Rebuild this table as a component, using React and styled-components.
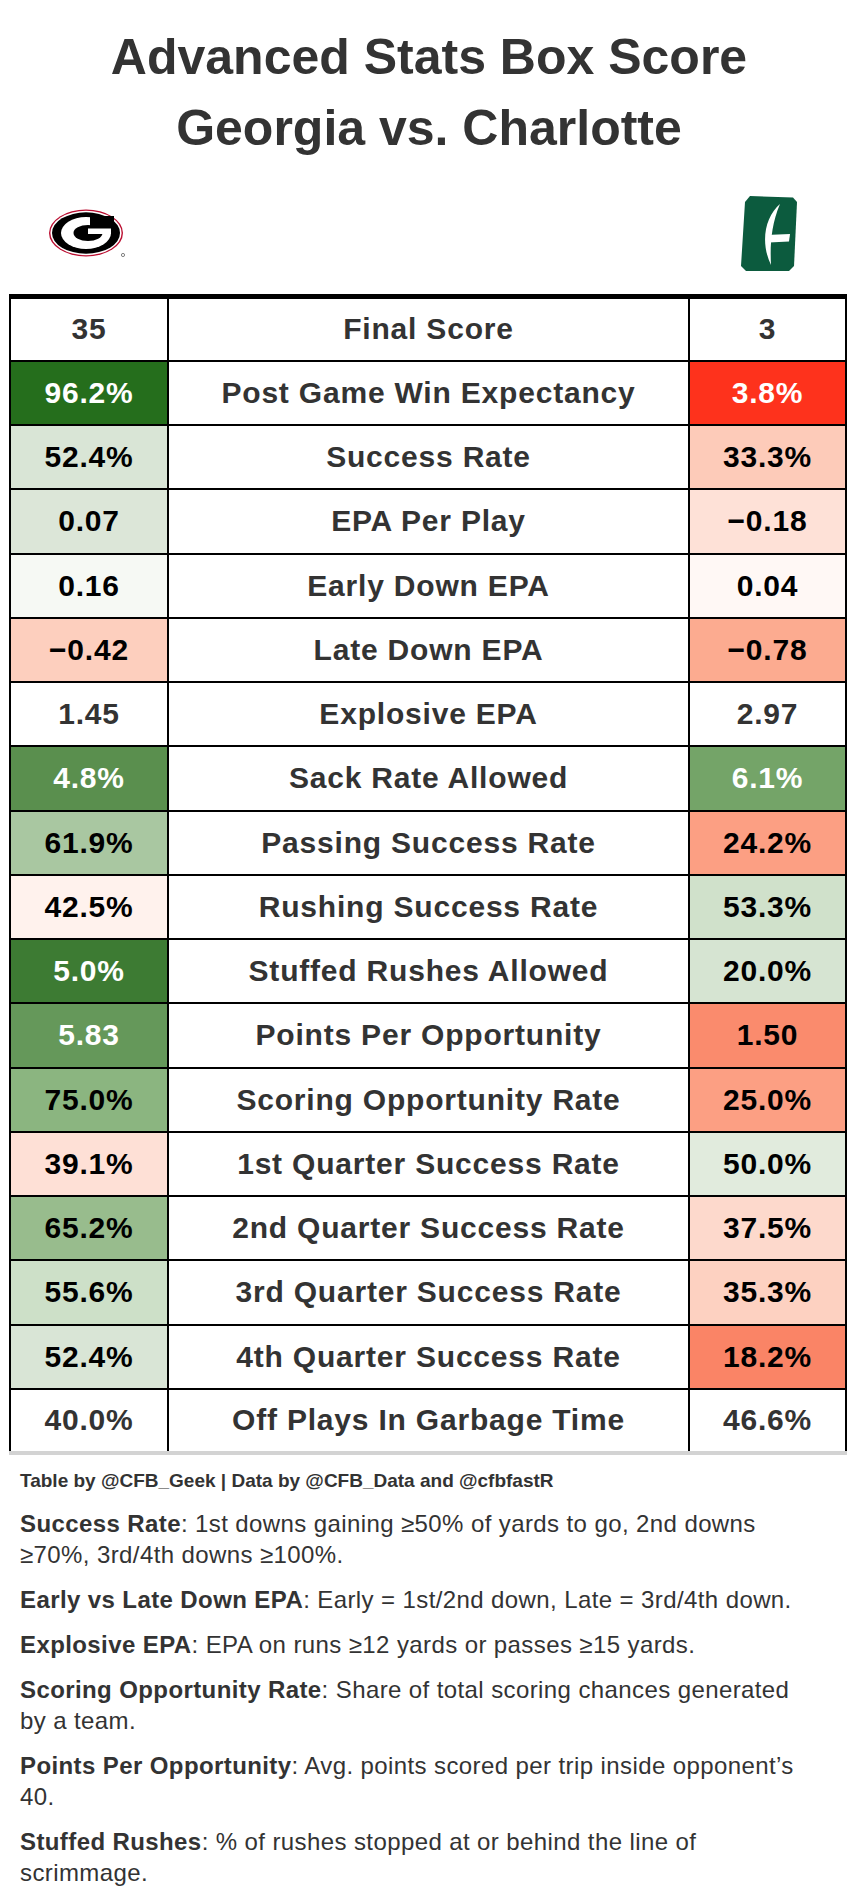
import React from "react";
import styled, { createGlobalStyle } from "styled-components";

const GlobalStyle = createGlobalStyle`
  body {
    margin: 0;
    background: #ffffff;
    font-family: "Liberation Sans", Arial, sans-serif;
  }
`;

const Page = styled.div`
  width: 858px;
  background: #ffffff;
  padding-bottom: 20px;
`;

const Title = styled.h1`
  margin: 0;
  padding-top: 22px;
  text-align: center;
  font-size: 50px;
  line-height: 71px;
  font-weight: 700;
  letter-spacing: 0;
  color: #333333;
`;

const LogoRow = styled.div`
  display: grid;
  grid-template-columns: 158px 1fr 157px;
  align-items: center;
  height: 120px;
  padding: 10px 11px 0 9px;
`;

const LogoSlot = styled.div`
  display: flex;
  justify-content: center;
  align-items: center;
`;

const Table = styled.table`
  margin-left: 9px;
  width: 838px;
  border-collapse: collapse;
  border-top: 5px solid #000;
  border-left: 2px solid #000;
  border-right: 2px solid #000;
  border-bottom: 4px solid #d3d3d3;
  table-layout: fixed;
`;

const Row = styled.tr`
  height: 64.25px;
`;

const Cell = styled.td`
  border: 2px solid #000;
  padding: 0;
  text-align: center;
  vertical-align: middle;
  font-size: 30px;
  font-weight: 700;
  letter-spacing: 0.8px;
  background: ${({ $bg }) => $bg || "#ffffff"};
  color: ${({ $fg }) => $fg || "#333333"};
`;

const Footer = styled.div`
  padding: 14px 0 0 20px;
  width: 800px;
  color: #333333;
`;

const Credit = styled.p`
  margin: 0 0 15px;
  font-size: 19px;
  font-weight: 700;
  line-height: 24px;
`;

const Note = styled.p`
  margin: 0 0 14px;
  font-size: 24px;
  line-height: 31px;
  letter-spacing: 0.4px;

  b {
    font-weight: 700;
  }
`;

const W = "#ffffff";
const K = "#000000";

const rows = [
  ["35", null, "#333333", "Final Score", "3", null, "#333333"],
  ["96.2%", "#256e1c", W, "Post Game Win Expectancy", "3.8%", "#fe321c", W],
  ["52.4%", "#d9e5d6", K, "Success Rate", "33.3%", "#fdcbb9", K],
  ["0.07", "#dce6d8", K, "EPA Per Play", "\u22120.18", "#fee1d7", K],
  ["0.16", "#f6f9f4", K, "Early Down EPA", "0.04", "#fff8f5", K],
  ["\u22120.42", "#fdcfbe", K, "Late Down EPA", "\u22120.78", "#fcab90", K],
  ["1.45", null, "#333333", "Explosive EPA", "2.97", null, "#333333"],
  ["4.8%", "#5a8f4e", W, "Sack Rate Allowed", "6.1%", "#74a468", W],
  ["61.9%", "#a9c7a1", K, "Passing Success Rate", "24.2%", "#fc9f83", K],
  ["42.5%", "#fff2ed", K, "Rushing Success Rate", "53.3%", "#d0e1cb", K],
  ["5.0%", "#3d7b33", W, "Stuffed Rushes Allowed", "20.0%", "#d6e4d2", K],
  ["5.83", "#65985a", W, "Points Per Opportunity", "1.50", "#fa8b6d", K],
  ["75.0%", "#8bb580", K, "Scoring Opportunity Rate", "25.0%", "#fc9f83", K],
  ["39.1%", "#fee0d6", K, "1st Quarter Success Rate", "50.0%", "#e1ebdd", K],
  ["65.2%", "#98bc8d", K, "2nd Quarter Success Rate", "37.5%", "#fdd9cc", K],
  ["55.6%", "#cde0c8", K, "3rd Quarter Success Rate", "35.3%", "#fdd1c1", K],
  ["52.4%", "#d9e5d6", K, "4th Quarter Success Rate", "18.2%", "#fa8466", K],
  ["40.0%", null, "#333333", "Off Plays In Garbage Time", "46.6%", null, "#333333"],
];

function GeorgiaLogo() {
  return (
    <svg width="78" height="50" viewBox="0 0 78 50">
      <ellipse cx="37" cy="24" rx="37" ry="23.5" fill="#ba0c2f" />
      <ellipse cx="37" cy="24" rx="35.6" ry="22.2" fill="#ffffff" />
      <ellipse cx="37" cy="24" rx="34" ry="20.7" fill="#000000" />
      <ellipse cx="37" cy="24" rx="25" ry="16" fill="#ffffff" />
      <ellipse cx="39" cy="24" rx="14.5" ry="8" fill="#000000" />
      <rect x="41" y="7" width="24" height="14.5" fill="#000000" />
      <rect x="39" y="19.5" width="23" height="5.5" fill="#ffffff" />
      <circle cx="74" cy="46" r="1.6" fill="none" stroke="#333" strokeWidth="0.6" />
    </svg>
  );
}

function CharlotteLogo() {
  return (
    <svg width="56" height="76" viewBox="0 0 56 76">
      <path
        d="M9 0 L52 1.5 L56 6 L53 70 L48 75 L5 75 L0 70 L4 6 Z"
        fill="#0c5b3e"
      />
      <path d="M39 8 C24 21 19 46 30 69 C29 50 30 29 39 8 Z" fill="#ffffff" />
      <path d="M25 39 L49 38 L48 45.5 L28 46.5 Z" fill="#ffffff" />
    </svg>
  );
}

export default function App() {
  return (
    <Page>
      <GlobalStyle />
      <Title>
        Advanced Stats Box Score
        <br />
        Georgia vs. Charlotte
      </Title>
      <LogoRow>
        <LogoSlot>
          <GeorgiaLogo />
        </LogoSlot>
        <div />
        <LogoSlot>
          <CharlotteLogo />
        </LogoSlot>
      </LogoRow>
      <Table>
        <colgroup>
          <col style={{ width: "158px" }} />
          <col />
          <col style={{ width: "157px" }} />
        </colgroup>
        <tbody>
          {rows.map(([lv, lbg, lfg, label, rv, rbg, rfg]) => (
            <Row key={label}>
              <Cell $bg={lbg} $fg={lfg}>{lv}</Cell>
              <Cell>{label}</Cell>
              <Cell $bg={rbg} $fg={rfg}>{rv}</Cell>
            </Row>
          ))}
        </tbody>
      </Table>
      <Footer>
        <Credit>Table by @CFB_Geek | Data by @CFB_Data and @cfbfastR</Credit>
        <Note>
          <b>Success Rate</b>: 1st downs gaining ≥50% of yards to go, 2nd downs ≥70%, 3rd/4th downs ≥100%.
        </Note>
        <Note>
          <b>Early vs Late Down EPA</b>: Early = 1st/2nd down, Late = 3rd/4th down.
        </Note>
        <Note>
          <b>Explosive EPA</b>: EPA on runs ≥12 yards or passes ≥15 yards.
        </Note>
        <Note>
          <b>Scoring Opportunity Rate</b>: Share of total scoring chances generated by a team.
        </Note>
        <Note>
          <b>Points Per Opportunity</b>: Avg. points scored per trip inside opponent’s 40.
        </Note>
        <Note>
          <b>Stuffed Rushes</b>: % of rushes stopped at or behind the line of scrimmage.
        </Note>
      </Footer>
    </Page>
  );
}
